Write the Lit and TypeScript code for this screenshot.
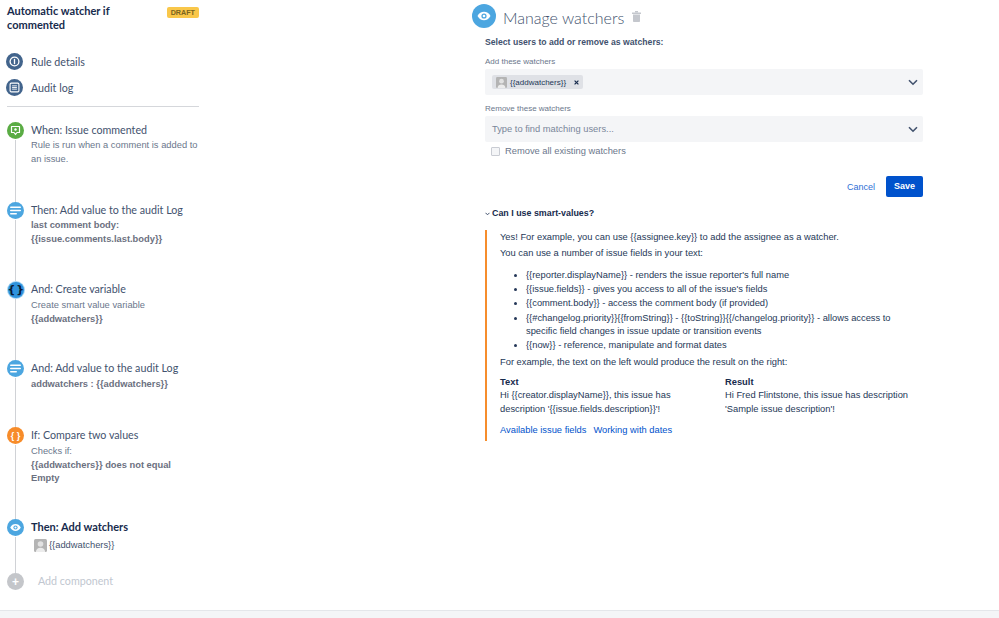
import { LitElement, html, css } from "lit";
import { customElement } from "lit/decorators.js";

const eye = (s: number) => html`<svg width=${s} height=${s} viewBox="0 0 16 16"><path d="M1.500 8C3 5.200 5.300 3.800 8 3.800S13 5.200 14.500 8C13 10.800 10.700 12.200 8 12.200S3 10.800 1.500 8Z" fill="#fff"/><circle cx="8" cy="8" r="2.600" fill="#4ca6e0"/><circle cx="8" cy="8" r="1.300" fill="#fff"/></svg>`;
const lines = html`<svg width="11" height="9" viewBox="0 0 11 9"><rect x="0" y="0.500" width="11" height="1.600" rx=".8" fill="#fff"/><rect x="0" y="3.700" width="11" height="1.600" rx=".8" fill="#fff"/><rect x="0" y="6.900" width="7" height="1.600" rx=".8" fill="#fff"/></svg>`;
const chevron = html`<svg class="chev" width="10" height="7" viewBox="0 0 10 7"><path d="M1 1.200L5 5.200L9 1.200" fill="none" stroke="#42526e" stroke-width="1.600"/></svg>`;
const avatar = html`<svg class="avatar" width="13" height="13" viewBox="0 0 13 13"><rect width="13" height="13" rx="1.500" fill="#b4b4b4"/><circle cx="6.500" cy="5" r="2.800" fill="#e2e2e2"/><path d="M1.800 13C2.200 9.800 4 8.800 6.500 8.800S10.800 9.800 11.200 13Z" fill="#ececec"/></svg>`;

@customElement("app-root")
export class AppRoot extends LitElement {
  static styles = css`
    :host { display: block; width: 999px; height: 618px; overflow: hidden; background: #f4f5f7; font-family: "Liberation Sans", Arial, sans-serif; color: #172b4d; }
    .page { height: 611px; display: flex; align-items: flex-start; background: #fff; border-bottom: 1px solid #e4e6ea; box-sizing: border-box; }
    .side { width: 192px; margin-left: 7px; flex: none; }
    .head { display: flex; justify-content: space-between; align-items: flex-start; padding-top: 4px; height: 36px; }
    .rule-name { font: 700 11px/13.500px Lato, sans-serif; color: #172b4d; width: 124px; }
    .draft { font: 700 7.200px/11px "Liberation Sans", sans-serif; background: #f9c74a; color: #7a6420; border-radius: 2px; padding: 0 4px; margin-top: 3px; }
    .nav { display: flex; align-items: center; height: 26px; gap: 8px; margin-left: -1px; font: 400 10.700px Lato, sans-serif; color: #42526e; }
    .nav-ic { width: 17px; height: 17px; border-radius: 50%; background: #42648c; display: grid; place-items: center; flex: none; }
    .navs { padding-top: 8px; }
    .rule { height: 1px; background: #d5d7db; margin-top: 6px; }
    .steps { margin-top: 15px; }
    .step { display: flex; gap: 7px; }
    .track { width: 17px; flex: none; display: flex; flex-direction: column; align-items: center; }
    .dot { width: 17px; height: 17px; border-radius: 50%; display: grid; place-items: center; flex: none; }
    .tail { flex: 1; width: 1.500px; background: #d0d2d6; margin-top: 1px; }
    .green { background: #5aac44; }
    .blue { background: #4ca6e0; }
    .dark { width: 16px; height: 16px; margin: .5px 0; background: #2f93dc; box-shadow: 0 0 0 1px #a9d6f3; color: #0b1a33; font: 700 11px/16px "DejaVu Sans", sans-serif; letter-spacing: 1px; }
    .orange { background: #f78c2a; color: #fff; font: 700 9px/16px "Liberation Sans", sans-serif; }
    .grey { background: #c4c6ca; color: #fff; font: 700 12px/16px "Liberation Sans", sans-serif; }
    .s79 { height: 80px; } .s81 { height: 79px; } .s78 { height: 79px; } .s67 { height: 67px; } .s92 { height: 92px; } .s54 { height: 54px; }
    .body { width: 172px; }
    .title { font: 400 10.700px/16px Lato, sans-serif; color: #42526e; white-space: nowrap; }
    .title.strong { font-size: 11px; font-weight: 700; color: #172b4d; }
    .desc { font: 400 9.330px/13.500px "Liberation Sans", sans-serif; color: #6b778c; margin-top: 2px; }
    .desc b { font-weight: 700; color: #6b7080; }
    .desc.tight { margin-top: 1px; }
    .watcher { display: flex; gap: 2px; align-items: center; font: 400 9.330px/13px "Liberation Sans", sans-serif; color: #42526e; margin: 4px 0 0 3px; }
    .add { font: 400 10.700px/16px Lato, sans-serif; color: #c1c7d0; margin-left: 7px; }

    .main { margin-left: 273px; width: 451px; flex: none; padding-top: 4px; }
    .mhead { display: flex; align-items: center; height: 24px; gap: 7px; }
    .big { width: 24px; height: 24px; border-radius: 50%; background: #4ca6e0; display: grid; place-items: center; }
    h1 { margin: 3px 0 0; font: 300 16px/24px Lato, sans-serif; color: #42526e; }
    .trash { margin-left: 1px; }
    .form { margin-left: 13px; width: 438px; }
    .select-label { font: 700 8.670px/11px "Liberation Sans", sans-serif; color: #42526e; margin-top: 9px; }
    .lab { font: 400 8px/11px "Liberation Sans", sans-serif; color: #6b778c; margin-top: 8px; }
    .input { height: 26px; background: #f4f5f7; border-radius: 2px; margin-top: 2px; display: flex; align-items: center; justify-content: space-between; padding: 0 5px 0 7px; }
    .ph { font: 400 9.330px "Liberation Sans", sans-serif; color: #7a869a; }
    .tag { display: flex; align-items: center; gap: 3px; height: 14px; background: #dfe1e6; border-radius: 2px; padding: 0 4px; font: 400 8px "Liberation Sans", sans-serif; color: #253858; }
    .tag .avatar { width: 11px; height: 11px; }
    .x { margin-left: 5px; }
    .check { display: flex; align-items: center; gap: 5px; margin: 3px 0 0 6px; font: 400 9.330px/13px "Liberation Sans", sans-serif; color: #6b778c; }
    .box { width: 7px; height: 7px; border: 1px solid #c9ccd3; background: #f4f5f7; border-radius: 1px; }
    .actions { display: flex; justify-content: flex-end; align-items: center; gap: 11px; margin-top: 18px; }
    .cancel { font: 400 9px "Liberation Sans", sans-serif; color: #2f6fd6; }
    .save { width: 37px; height: 21px; background: #0052cc; color: #fff; font: 700 9px/21px "Liberation Sans", sans-serif; text-align: center; border-radius: 2px; }
    .exp { display: flex; align-items: center; gap: 2px; margin-top: 10px; font: 700 8.900px/13px "Liberation Sans", sans-serif; color: #172b4d; }
    .panel { border-left: 2.500px solid #f68d2c; margin-top: 10px; padding: 1px 0 2px 13px; font: 400 9.330px/13.330px "Liberation Sans", sans-serif; color: #253858; height: 211px; box-sizing: border-box; width: 438px; }
    .panel p { margin: 0 0 1px; }
    .panel p + p { margin-top: 3px; }
    ul { margin: 8px 0 3px; padding: 0 0 0 26px; }
    li { margin-bottom: 1px; width: 375px; }
    .cols { display: grid; grid-template-columns: 225px 200px; margin-top: 7px; }
    .cols b { display: block; color: #172b4d; }
    .links { display: flex; gap: 7px; margin-top: 8px; color: #0052cc; }
  `;

  render() {
    return html`<div class="page">
      <aside class="side">
        <div class="head"><div class="rule-name">Automatic watcher if commented</div><span class="draft">DRAFT</span></div>
        <div class="navs">
          <div class="nav"><span class="nav-ic"><svg width="11" height="11" viewBox="0 0 10 10"><circle cx="5" cy="5" r="4" fill="none" stroke="#fff" stroke-width="1.200"/><rect x="4.400" y="2.600" width="1.200" height="4.800" fill="#fff"/></svg></span>Rule details</div>
          <div class="nav"><span class="nav-ic"><svg width="11" height="11" viewBox="0 0 10 10"><rect x="1" y="1" width="8" height="8" rx="1" fill="none" stroke="#fff" stroke-width="1"/><path d="M2.800 3.500H7.200M2.800 5H7.200M2.800 6.500H7.200" stroke="#fff" stroke-width=".8"/></svg></span>Audit log</div>
        </div>
        <div class="rule"></div>
        <div class="steps">
          <div class="step s79"><div class="track"><span class="dot green"><svg width="11" height="11" viewBox="0 0 11 11"><path d="M1.500 1.500H9.500V7.500H7L5.500 9.500L4 7.500H1.500Z" fill="none" stroke="#fff" stroke-width="1.200" stroke-linejoin="round"/><circle cx="5.500" cy="4.500" r="1.200" fill="#fff"/></svg></span><i class="tail"></i></div>
            <div class="body"><div class="title">When: Issue commented</div><div class="desc tight">Rule is run when a comment is added to an issue.</div></div></div>
          <div class="step s81"><div class="track"><span class="dot blue">${lines}</span><i class="tail"></i></div>
            <div class="body"><div class="title">Then: Add value to the audit Log</div><div class="desc tight"><b>last comment body:<br>{{issue.comments.last.body}}</b></div></div></div>
          <div class="step s78"><div class="track"><span class="dot dark">{}</span><i class="tail"></i></div>
            <div class="body"><div class="title">And: Create variable</div><div class="desc">Create smart value variable<br><b>{{addwatchers}}</b></div></div></div>
          <div class="step s67"><div class="track"><span class="dot blue">${lines}</span><i class="tail"></i></div>
            <div class="body"><div class="title">And: Add value to the audit Log</div><div class="desc"><b>addwatchers : {{addwatchers}}</b></div></div></div>
          <div class="step s92"><div class="track"><span class="dot orange">{ }</span><i class="tail"></i></div>
            <div class="body"><div class="title">If: Compare two values</div><div class="desc">Checks if:<br><b>{{addwatchers}} does not equal<br>Empty</b></div></div></div>
          <div class="step s54"><div class="track"><span class="dot blue">${eye(13)}</span><i class="tail"></i></div>
            <div class="body"><div class="title strong">Then: Add watchers</div><div class="watcher">${avatar}<span>{{addwatchers}}</span></div></div></div>
          <div class="step"><div class="track"><span class="dot grey">+</span></div><div class="body"><div class="add">Add component</div></div></div>
        </div>
      </aside>
      <main class="main">
        <div class="mhead"><span class="big">${eye(16)}</span><h1>Manage watchers</h1>
          <svg class="trash" width="9" height="11" viewBox="0 0 9 11"><rect x="3" y="0" width="3" height="1.500" fill="#c4c7cd"/><rect x="0" y="1.500" width="9" height="1.500" fill="#c4c7cd"/><path d="M1 3.500H8V10.200Q8 11 7.200 11H1.800Q1 11 1 10.200Z" fill="#c4c7cd"/></svg></div>
        <div class="form">
          <div class="select-label">Select users to add or remove as watchers:</div>
          <div class="lab">Add these watchers</div>
          <div class="input"><span class="tag">${avatar}<span>{{addwatchers}}</span><svg class="x" width="5" height="5" viewBox="0 0 5 5"><path d="M.6 .6L4.400 4.400M4.400 .6L.6 4.400" stroke="#172b4d" stroke-width="1.200"/></svg></span>${chevron}</div>
          <div class="lab">Remove these watchers</div>
          <div class="input"><span class="ph">Type to find matching users...</span>${chevron}</div>
          <label class="check"><span class="box"></span>Remove all existing watchers</label>
          <div class="actions"><span class="cancel">Cancel</span><span class="save">Save</span></div>
          <div class="exp"><svg width="5" height="4" viewBox="0 0 5 4"><path d="M.5 .8L2.500 2.800L4.500 .8" fill="none" stroke="#42526e" stroke-width="1"/></svg>Can I use smart-values?</div>
          <div class="panel">
            <p>Yes! For example, you can use {{assignee.key}} to add the assignee as a watcher.</p>
            <p>You can use a number of issue fields in your text:</p>
            <ul>
              <li>{{reporter.displayName}} - renders the issue reporter's full name</li>
              <li>{{issue.fields}} - gives you access to all of the issue's fields</li>
              <li>{{comment.body}} - access the comment body (if provided)</li>
              <li>{{#changelog.priority}}{{fromString}} - {{toString}}{{/changelog.priority}} - allows access to specific field changes in issue update or transition events</li>
              <li>{{now}} - reference, manipulate and format dates</li>
            </ul>
            <p>For example, the text on the left would produce the result on the right:</p>
            <div class="cols">
              <div><b>Text</b>Hi {{creator.displayName}}, this issue has<br>description '{{issue.fields.description}}'!</div>
              <div><b>Result</b>Hi Fred Flintstone, this issue has description<br>'Sample issue description'!</div>
            </div>
            <div class="links"><span>Available issue fields</span><span>Working with dates</span></div>
          </div>
        </div>
      </main>
    </div>`;
  }
}
